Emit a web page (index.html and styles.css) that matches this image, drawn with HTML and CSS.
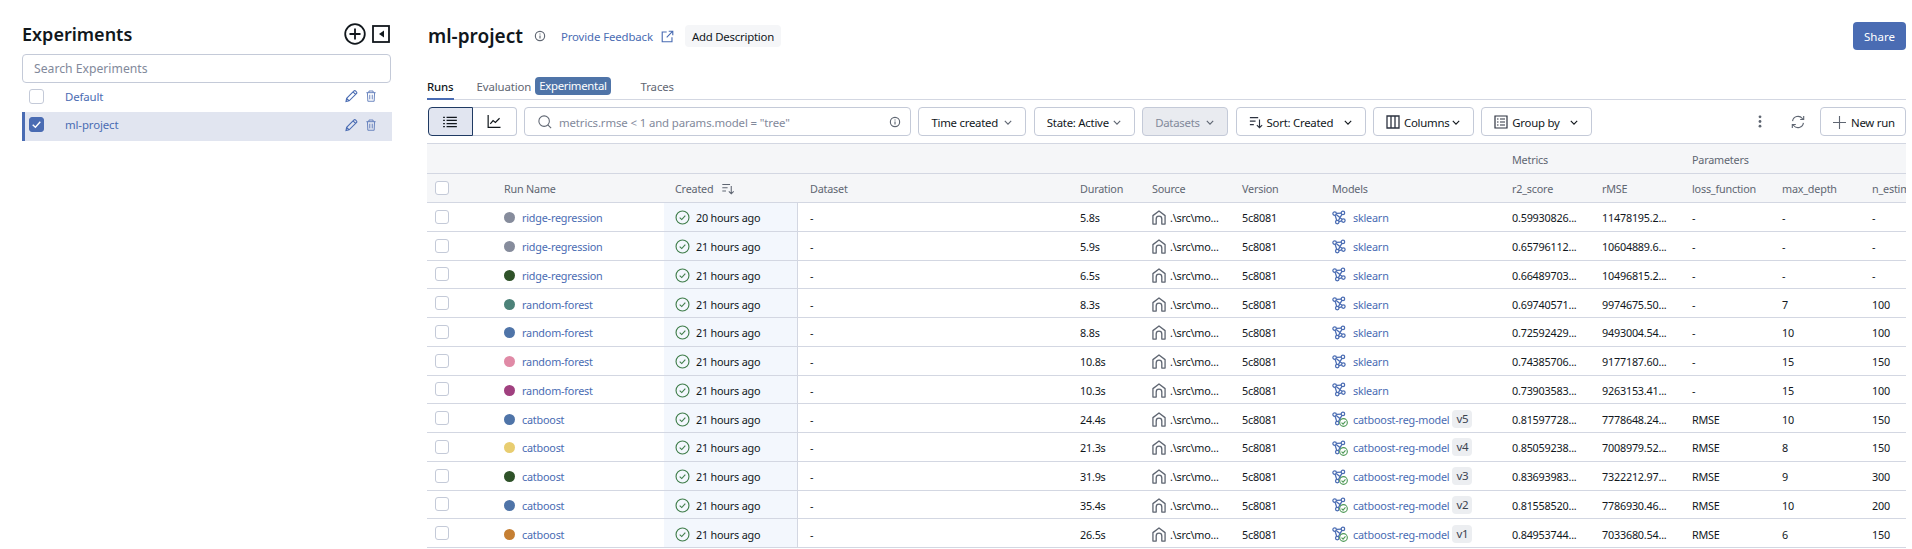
FILE: index.html
```html
<!DOCTYPE html>
<html lang="en">
<head>
  <meta charset="UTF-8" />
  <meta name="viewport" content="width=device-width, initial-scale=1.0" />
  <title>ml-project</title>
  <link rel="stylesheet" href="styles.css">
</head>
<body>
  <svg class="sprites" width="0" height="0">
    <symbol id="i-info" viewBox="0 0 16 16"><circle cx="8" cy="8" r="6.2" fill="none" stroke="currentColor" stroke-width="1.5"/><path d="M8 7.2v4M8 4.6v1.4" stroke="currentColor" stroke-width="1.5"/></symbol>
    <symbol id="i-ext" viewBox="0 0 16 16"><path d="M7 2.500H1.500v12h12V9M9.500 1.500h5v5M14.500 1.500 7 9" fill="none" stroke="currentColor" stroke-width="1.400"/></symbol>
    <symbol id="i-pencil" viewBox="0 0 16 16"><path d="M1.200 14.800l.8-3.900L10.800 2a1.700 1.700 0 0 1 2.400 0l.8.800a1.700 1.700 0 0 1 0 2.400L5.100 14zM2 10.900l3.100 3.100M9.900 3l3.100 3.100" fill="none" stroke="currentColor" stroke-width="1.300"/></symbol>
    <symbol id="i-trash" viewBox="0 0 12 14"><path d="M.5 3h11M3.500 3V1h5v2M1.700 3l.5 10.300h7.600L10.300 3M4.500 5.500v5.500M7.500 5.500v5.500" fill="none" stroke="currentColor" stroke-width="1.100"/></symbol>
    <symbol id="i-check" viewBox="0 0 16 16"><circle cx="8" cy="8" r="6.900" fill="none" stroke="currentColor" stroke-width="1.200"/><path d="M5 8.200 7.200 10.200l3.800-4.200" fill="none" stroke="currentColor" stroke-width="1.200"/></symbol>
    <symbol id="i-home" viewBox="0 0 15 16"><path d="M1 15V6l6.500-5L14 6v9h-3.500V9.500a3 3 0 0 0-6 0V15z" fill="none" stroke="currentColor" stroke-width="1.400" stroke-linejoin="round"/></symbol>
    <symbol id="i-model" viewBox="0 0 16 16"><g fill="none" stroke="currentColor" stroke-width="1.400"><circle cx="3" cy="3.500" r="2"/><circle cx="12.500" cy="2.800" r="2"/><circle cx="6" cy="13.200" r="2"/><circle cx="13" cy="11.500" r="2"/><path d="M5 3.400l5.600-.5M3.600 5.400l1.800 6M11.300 4.400l-4 7.200M4.800 4.500l6.600 5.500M8 12.800l3.100-.9"/></g></symbol>
    <symbol id="i-registered" viewBox="0 0 16 16"><circle cx="8" cy="8" r="6.800" fill="#fff" stroke="#4f9a57" stroke-width="2"/><path d="M4.500 8.200 7.200 10.800 11.500 5.800" fill="none" stroke="#4f9a57" stroke-width="2"/></symbol>
    <symbol id="i-sort" viewBox="0 0 16 16"><path d="M1 3h9.500M1 7h6.500M1 11h4.500M12 5v9.500M9 11.500l3 3 3-3" fill="none" stroke="currentColor" stroke-width="1.300"/></symbol>
    <symbol id="i-chev" viewBox="0 0 10 6"><path d="M1 1l4 4 4-4" fill="none" stroke="currentColor" stroke-width="1.400"/></symbol>
  </svg>

  <div class="page">
    <aside class="sidebar">
      <div class="side-head">
        <h1 class="side-title">Experiments</h1>
        <svg class="add-icon" viewBox="0 0 22 22"><circle cx="11" cy="11" r="9.800" fill="none" stroke="currentColor" stroke-width="1.800"/><path d="M11 5.500v11M5.500 11h11" stroke="currentColor" stroke-width="1.800"/></svg>
        <svg class="collapse-icon" viewBox="0 0 18 18"><rect x="1" y="1" width="16" height="16" fill="none" stroke="currentColor" stroke-width="1.800"/><path d="M12 5.500v7L7 9z" fill="currentColor"/></svg>
      </div>
      <input class="side-search" type="text" placeholder="Search Experiments" />
      <div class="exp-row">
        <span class="box"></span>
        <a class="exp-name">Default</a>
        <svg class="exp-icon pencil"><use href="#i-pencil"/></svg>
        <svg class="exp-icon trash"><use href="#i-trash"/></svg>
      </div>
      <div class="exp-row selected">
        <span class="box checked"><svg viewBox="0 0 12 12"><path d="M2.500 6.200 5 8.500l4.500-5" fill="none" stroke="#fff" stroke-width="1.300"/></svg></span>
        <a class="exp-name">ml-project</a>
        <svg class="exp-icon pencil"><use href="#i-pencil"/></svg>
        <svg class="exp-icon trash"><use href="#i-trash"/></svg>
      </div>
    </aside>

    <main class="main">
      <div class="title-row">
        <h2 class="title">ml-project</h2>
        <svg class="info-icon"><use href="#i-info"/></svg>
        <a class="feedback">Provide Feedback</a>
        <svg class="ext-icon"><use href="#i-ext"/></svg>
        <button class="add-desc">Add Description</button>
        <button class="share">Share</button>
      </div>

      <div class="tabs">
        <span class="tab active">Runs</span>
        <span class="tab eval">Evaluation</span>
        <span class="badge">Experimental</span>
        <span class="tab traces">Traces</span>
      </div>

      <div class="toolbar">
        <div class="view-switch">
          <span class="view on"><svg width="14" height="12" viewBox="0 0 16 14"><path d="M0 1.500h2M4 1.500h12M0 5.200h2M4 5.200h12M0 8.900h2M4 8.900h12M0 12.500h2M4 12.500h12" stroke="currentColor" stroke-width="1.400"/></svg></span>
          <span class="view"><svg width="14" height="13" viewBox="0 0 14 14"><path d="M.7 0v13.300H14M3 9.500l3-3.500 2.500 2L13 3.500" fill="none" stroke="currentColor" stroke-width="1.300"/></svg></span>
        </div>
        <div class="run-search">
          <svg class="search-icon" viewBox="0 0 16 16"><circle cx="7" cy="7" r="6" fill="none" stroke="currentColor" stroke-width="1.200"/><path d="M11.200 11.200 15 15" stroke="currentColor" stroke-width="1.200"/></svg>
          <span class="query">metrics.rmse &lt; 1 and params.model = "tree"</span>
          <svg class="info-icon"><use href="#i-info"/></svg>
        </div>
        <button class="tool w-time">Time created <svg class="chev"><use href="#i-chev"/></svg></button>
        <button class="tool w-state">State: Active <svg class="chev"><use href="#i-chev"/></svg></button>
        <button class="tool w-data" disabled>Datasets <svg class="chev"><use href="#i-chev"/></svg></button>
        <button class="tool w-sort"><svg class="tool-icon"><use href="#i-sort"/></svg>Sort: Created <svg class="chev dark"><use href="#i-chev"/></svg></button>
        <button class="tool w-cols"><svg class="tool-icon" viewBox="0 0 14 14"><path d="M1 1h12v12H1zM5 1v12M9 1v12" fill="none" stroke="currentColor" stroke-width="1.300"/></svg>Columns <svg class="chev dark"><use href="#i-chev"/></svg></button>
        <button class="tool w-group"><svg class="tool-icon" viewBox="0 0 14 14"><path d="M1 1h12v12H1zM3 4h1.500M6 4h5M3 7h1.500M6 7h5M3 10h1.500M6 10h5" fill="none" stroke="currentColor" stroke-width="1.200"/></svg>Group by <svg class="chev dark"><use href="#i-chev"/></svg></button>
        <div class="tool-right">
          <svg class="kebab" viewBox="0 0 4 14"><circle cx="2" cy="2" r="1.500"/><circle cx="2" cy="7" r="1.500"/><circle cx="2" cy="12" r="1.500"/></svg>
          <svg class="refresh" viewBox="0 0 16 16"><path d="M1.800 7A6.300 6.300 0 0 1 13 4l1 1.200M14.200 9A6.300 6.300 0 0 1 3 12l-1-1.200M14.500 1.200v4h-4M1.500 14.800v-4h4" fill="none" stroke="currentColor" stroke-width="1.300"/></svg>
          <button class="tool new-run"><svg class="plus" viewBox="0 0 14 14"><path d="M7 0v14M0 7h14" stroke="currentColor" stroke-width="1.200"/></svg>New run</button>
        </div>
      </div>

      <div class="table">
        <div class="row head group">
          <span></span><span></span><span></span><span></span><span></span><span></span><span></span><span></span>
          <span class="group-label">Metrics</span><span></span>
          <span class="group-label">Parameters</span><span></span><span></span>
        </div>
        <div class="row head">
          <span class="cell-check"><span class="box small"></span></span>
          <span>Run Name</span>
          <span class="created-head">Created <svg class="sort-mini"><use href="#i-sort"/></svg></span>
          <span>Dataset</span><span>Duration</span><span>Source</span><span>Version</span><span>Models</span>
          <span>r2_score</span><span>rMSE</span><span>loss_function</span><span>max_depth</span><span>n_estimators</span>
        </div>

        <div class="row">
          <span class="cell-check"><span class="box small"></span></span>
          <span class="run"><i class="dot c-gray"></i><a>ridge-regression</a></span>
          <span class="created"><svg class="ok"><use href="#i-check"/></svg>20 hours ago</span>
          <span>-</span><span>5.8s</span>
          <span class="src"><svg><use href="#i-home"/></svg>.\src\mo...</span><span>5c8081</span>
          <span class="model"><svg class="net"><use href="#i-model"/></svg><a>sklearn</a></span>
          <span>0.59930826...</span><span>11478195.2...</span><span>-</span><span>-</span><span>-</span>
        </div>
        <div class="row">
          <span class="cell-check"><span class="box small"></span></span>
          <span class="run"><i class="dot c-gray"></i><a>ridge-regression</a></span>
          <span class="created"><svg class="ok"><use href="#i-check"/></svg>21 hours ago</span>
          <span>-</span><span>5.9s</span>
          <span class="src"><svg><use href="#i-home"/></svg>.\src\mo...</span><span>5c8081</span>
          <span class="model"><svg class="net"><use href="#i-model"/></svg><a>sklearn</a></span>
          <span>0.65796112...</span><span>10604889.6...</span><span>-</span><span>-</span><span>-</span>
        </div>
        <div class="row">
          <span class="cell-check"><span class="box small"></span></span>
          <span class="run"><i class="dot c-forest"></i><a>ridge-regression</a></span>
          <span class="created"><svg class="ok"><use href="#i-check"/></svg>21 hours ago</span>
          <span>-</span><span>6.5s</span>
          <span class="src"><svg><use href="#i-home"/></svg>.\src\mo...</span><span>5c8081</span>
          <span class="model"><svg class="net"><use href="#i-model"/></svg><a>sklearn</a></span>
          <span>0.66489703...</span><span>10496815.2...</span><span>-</span><span>-</span><span>-</span>
        </div>
        <div class="row">
          <span class="cell-check"><span class="box small"></span></span>
          <span class="run"><i class="dot c-teal"></i><a>random-forest</a></span>
          <span class="created"><svg class="ok"><use href="#i-check"/></svg>21 hours ago</span>
          <span>-</span><span>8.3s</span>
          <span class="src"><svg><use href="#i-home"/></svg>.\src\mo...</span><span>5c8081</span>
          <span class="model"><svg class="net"><use href="#i-model"/></svg><a>sklearn</a></span>
          <span>0.69740571...</span><span>9974675.50...</span><span>-</span><span>7</span><span>100</span>
        </div>
        <div class="row">
          <span class="cell-check"><span class="box small"></span></span>
          <span class="run"><i class="dot c-blue"></i><a>random-forest</a></span>
          <span class="created"><svg class="ok"><use href="#i-check"/></svg>21 hours ago</span>
          <span>-</span><span>8.8s</span>
          <span class="src"><svg><use href="#i-home"/></svg>.\src\mo...</span><span>5c8081</span>
          <span class="model"><svg class="net"><use href="#i-model"/></svg><a>sklearn</a></span>
          <span>0.72592429...</span><span>9493004.54...</span><span>-</span><span>10</span><span>100</span>
        </div>
        <div class="row">
          <span class="cell-check"><span class="box small"></span></span>
          <span class="run"><i class="dot c-pink"></i><a>random-forest</a></span>
          <span class="created"><svg class="ok"><use href="#i-check"/></svg>21 hours ago</span>
          <span>-</span><span>10.8s</span>
          <span class="src"><svg><use href="#i-home"/></svg>.\src\mo...</span><span>5c8081</span>
          <span class="model"><svg class="net"><use href="#i-model"/></svg><a>sklearn</a></span>
          <span>0.74385706...</span><span>9177187.60...</span><span>-</span><span>15</span><span>150</span>
        </div>
        <div class="row">
          <span class="cell-check"><span class="box small"></span></span>
          <span class="run"><i class="dot c-purple"></i><a>random-forest</a></span>
          <span class="created"><svg class="ok"><use href="#i-check"/></svg>21 hours ago</span>
          <span>-</span><span>10.3s</span>
          <span class="src"><svg><use href="#i-home"/></svg>.\src\mo...</span><span>5c8081</span>
          <span class="model"><svg class="net"><use href="#i-model"/></svg><a>sklearn</a></span>
          <span>0.73903583...</span><span>9263153.41...</span><span>-</span><span>15</span><span>100</span>
        </div>
        <div class="row">
          <span class="cell-check"><span class="box small"></span></span>
          <span class="run"><i class="dot c-blue"></i><a>catboost</a></span>
          <span class="created"><svg class="ok"><use href="#i-check"/></svg>21 hours ago</span>
          <span>-</span><span>24.4s</span>
          <span class="src"><svg><use href="#i-home"/></svg>.\src\mo...</span><span>5c8081</span>
          <span class="model"><span class="net-wrap"><svg class="net"><use href="#i-model"/></svg><svg class="reg"><use href="#i-registered"/></svg></span><a>catboost-reg-model</a><b class="ver">v5</b></span>
          <span>0.81597728...</span><span>7778648.24...</span><span>RMSE</span><span>10</span><span>150</span>
        </div>
        <div class="row">
          <span class="cell-check"><span class="box small"></span></span>
          <span class="run"><i class="dot c-yellow"></i><a>catboost</a></span>
          <span class="created"><svg class="ok"><use href="#i-check"/></svg>21 hours ago</span>
          <span>-</span><span>21.3s</span>
          <span class="src"><svg><use href="#i-home"/></svg>.\src\mo...</span><span>5c8081</span>
          <span class="model"><span class="net-wrap"><svg class="net"><use href="#i-model"/></svg><svg class="reg"><use href="#i-registered"/></svg></span><a>catboost-reg-model</a><b class="ver">v4</b></span>
          <span>0.85059238...</span><span>7008979.52...</span><span>RMSE</span><span>8</span><span>150</span>
        </div>
        <div class="row">
          <span class="cell-check"><span class="box small"></span></span>
          <span class="run"><i class="dot c-forest"></i><a>catboost</a></span>
          <span class="created"><svg class="ok"><use href="#i-check"/></svg>21 hours ago</span>
          <span>-</span><span>31.9s</span>
          <span class="src"><svg><use href="#i-home"/></svg>.\src\mo...</span><span>5c8081</span>
          <span class="model"><span class="net-wrap"><svg class="net"><use href="#i-model"/></svg><svg class="reg"><use href="#i-registered"/></svg></span><a>catboost-reg-model</a><b class="ver">v3</b></span>
          <span>0.83693983...</span><span>7322212.97...</span><span>RMSE</span><span>9</span><span>300</span>
        </div>
        <div class="row">
          <span class="cell-check"><span class="box small"></span></span>
          <span class="run"><i class="dot c-blue"></i><a>catboost</a></span>
          <span class="created"><svg class="ok"><use href="#i-check"/></svg>21 hours ago</span>
          <span>-</span><span>35.4s</span>
          <span class="src"><svg><use href="#i-home"/></svg>.\src\mo...</span><span>5c8081</span>
          <span class="model"><span class="net-wrap"><svg class="net"><use href="#i-model"/></svg><svg class="reg"><use href="#i-registered"/></svg></span><a>catboost-reg-model</a><b class="ver">v2</b></span>
          <span>0.81558520...</span><span>7786930.46...</span><span>RMSE</span><span>10</span><span>200</span>
        </div>
        <div class="row">
          <span class="cell-check"><span class="box small"></span></span>
          <span class="run"><i class="dot c-orange"></i><a>catboost</a></span>
          <span class="created"><svg class="ok"><use href="#i-check"/></svg>21 hours ago</span>
          <span>-</span><span>26.5s</span>
          <span class="src"><svg><use href="#i-home"/></svg>.\src\mo...</span><span>5c8081</span>
          <span class="model"><span class="net-wrap"><svg class="net"><use href="#i-model"/></svg><svg class="reg"><use href="#i-registered"/></svg></span><a>catboost-reg-model</a><b class="ver">v1</b></span>
          <span>0.84953744...</span><span>7033680.54...</span><span>RMSE</span><span>6</span><span>150</span>
        </div>
      </div>
    </main>
  </div>
</body>
</html>
```

FILE: styles.css
```css
* {
  box-sizing: border-box;
}
html, body {
  margin: 0;
  height: 100%;
  overflow: hidden;
}
body {
  font-family: "Noto Sans", Arial, sans-serif;
  font-size: 11.400px;
  letter-spacing: -0.120px;
  color: #11171c;
  background: #fff;
}
a {
  color: #4a6cb3;
}
.sprites {
  position: absolute;
}
.page {
  display: flex;
  width: 1912px;
  padding: 22px 6px 0 22px;
}

/* sidebar */
.sidebar {
  width: 370px;
  flex: none;
}
.side-head {
  display: flex;
  align-items: center;
  height: 24px;
  margin-bottom: 8px;
}
.side-title {
  margin: 0 auto 0 0;
  font-size: 18px;
  font-weight: 600;
  letter-spacing: 0;
}
.add-icon {
  width: 22px;
  height: 22px;
  margin-right: 6px;
}
.collapse-icon {
  width: 18px;
  height: 18px;
  margin-right: 2px;
}
.side-search {
  display: block;
  width: 369px;
  height: 29px;
  padding: 0 11px;
  border: 1px solid #c4cad8;
  border-radius: 4px;
  font: inherit;
  font-size: 12.200px;
  letter-spacing: 0;
}
.side-search::placeholder {
  color: #82899b;
}
.exp-row {
  display: flex;
  align-items: center;
  height: 29px;
  padding: 0 0 3px 7px;
}
.exp-row.selected {
  background: #e1e5f0;
  border-left: 3px solid #4a6cb3;
  padding: 0 0 4px 4px;
}
.exp-name {
  margin-left: 21px;
  margin-right: auto;
}
.exp-icon {
  width: 13px;
  height: 14px;
  color: #4a6cb3;
}
.exp-icon.trash {
  width: 10px;
  margin: 0 16px 0 8px;
  color: #5f7cba;
}
.box {
  display: block;
  width: 15px;
  height: 15px;
  flex: none;
  border: 1px solid #c4cad8;
  border-radius: 3px;
  background: #fff;
}
.box.small {
  width: 14px;
  height: 14px;
}
.box.checked {
  background: #4a6cb3;
  border-color: #4a6cb3;
}
.box.checked svg {
  display: block;
  width: 13px;
  height: 13px;
}

/* title and tabs */
.main {
  width: 1478px;
  margin-left: 36px;
  flex: none;
}
.title-row {
  display: flex;
  align-items: center;
  height: 28px;
}
.title {
  margin: 0;
  font-size: 19px;
  font-weight: 600;
  letter-spacing: 0;
}
.info-icon {
  width: 12px;
  height: 12px;
  color: #5f6672;
}
.title-row .info-icon {
  margin-left: 11px;
}
.feedback {
  margin-left: 15px;
}
.ext-icon {
  width: 13px;
  height: 13px;
  margin-left: 8px;
  color: #4a6cb3;
}
.add-desc {
  height: 22px;
  margin-left: 11px;
  padding: 0 7px;
  border: none;
  border-radius: 4px;
  background: #f5f6f8;
  font: inherit;
  letter-spacing: -0.230px;
  color: #11171c;
}
.share {
  width: 53px;
  height: 28px;
  margin-left: auto;
  border: none;
  border-radius: 4px;
  background: #4a6cb3;
  color: #fff;
  font: inherit;
  font-size: 11.500px;
}
.tabs {
  display: flex;
  align-items: center;
  height: 28px;
  margin: 22px 0 0 -1px;
  border-bottom: 1px solid #d3d7e2;
}
.tab {
  padding-top: 1px;
  line-height: 27px;
  color: #5f6672;
}
.tab.active {
  color: #11171c;
  font-weight: 500;
  box-shadow: inset 0 -2px 0 #4a6cb3;
  height: 28px;
}
.tab.eval {
  margin-left: 23px;
}
.badge {
  margin-left: 4px;
  padding: 0 4px;
  height: 18px;
  line-height: 18px;
  border-radius: 4px;
  background: #4f74a8;
  color: #fff;
  letter-spacing: -0.300px;
}
.tab.traces {
  margin-left: 30px;
}

/* toolbar */
.toolbar {
  display: flex;
  align-items: center;
  gap: 7.400px;
  height: 29px;
  margin-top: 7px;
}
.view-switch {
  display: flex;
  width: 88.600px;
  height: 29px;
  flex: none;
}
.view {
  flex: 1;
  display: flex;
  align-items: center;
  justify-content: center;
  border: 1px solid #c4cad8;
  border-left: none;
  border-radius: 0 4px 4px 0;
}
.view.on {
  background: #e1e5f0;
  border: 1px solid #1f3a63;
  border-radius: 4px 0 0 4px;
}
.run-search {
  display: flex;
  align-items: center;
  width: 387px;
  height: 29px;
  padding: 0 9px 0 13px;
  flex: none;
  border: 1px solid #c4cad8;
  border-radius: 4px;
}
.search-icon {
  width: 14px;
  height: 14px;
  color: #5f6672;
}
.query {
  margin: 1px auto 0 7px;
  color: #82899b;
}
.tool {
  display: flex;
  align-items: center;
  height: 29px;
  padding: 1px 13px 0 12px;
  flex: none;
  border: 1px solid #c4cad8;
  border-radius: 4px;
  background: #fff;
  font: inherit;
  letter-spacing: -0.250px;
  color: #11171c;
  white-space: nowrap;
}
.tool[disabled] {
  background: #e9ebf0;
  color: #82899b;
}
.w-time { width: 108px; }
.w-state { width: 101px; }
.w-data { width: 86px; }
.w-sort { width: 130px; }
.w-cols { width: 101px; }
.w-group { width: 111px; }
.chev {
  width: 8px;
  height: 5px;
  margin-left: auto;
  color: #5f6672;
}
.chev.dark {
  color: #11171c;
}
.tool-icon {
  width: 14px;
  height: 14px;
  margin-right: 4px;
  flex: none;
  color: #2d3340;
}
.tool-right {
  display: flex;
  align-items: center;
  margin-left: auto;
}
.kebab {
  width: 4px;
  height: 13px;
  fill: #5f6672;
}
.refresh {
  width: 14px;
  height: 14px;
  margin: 0 15px 0 29px;
  color: #5f6672;
}
.tool.new-run {
  width: 86px;
  padding: 1px 0 0 12px;
}
.plus {
  width: 13px;
  height: 13px;
  margin-right: 5px;
  flex: none;
  color: #5f6672;
}

/* runs table */
.table {
  width: 1479px;
  margin: 7px 0 0 -1px;
  overflow: hidden;
  border-top: 1px solid #d3d7e2;
  font-size: 10.800px;
  letter-spacing: -0.200px;
}
.row {
  display: grid;
  grid-template-columns: 65px 172px 134px 270px 72px 90px 90px 180px 90px 90px 90px 90px 90px;
  align-items: center;
  height: 28.750px;
  border-bottom: 1px solid #d3d7e2;
  white-space: nowrap;
}
.row > span {
  padding-left: 12px;
  padding-top: 2px;
}
.row > .model {
  padding-top: 1px;
}
.row.head {
  height: 29.500px;
  background: #f5f6f8;
  color: #5f6672;
}
.row > .cell-check {
  padding: 0 0 0 8px;
}
.row > .created-head {
  display: flex;
  align-items: center;
  padding-left: 11px;
}
.sort-mini {
  width: 14px;
  height: 13px;
  margin-left: 8px;
}
.run {
  display: flex;
  align-items: center;
}
.dot {
  width: 11px;
  height: 11px;
  margin-right: 7px;
  border-radius: 50%;
}
.c-gray { background: #868c9c; }
.c-forest { background: #2f5229; }
.c-teal { background: #4c8279; }
.c-blue { background: #4f74a8; }
.c-pink { background: #e08aa6; }
.c-purple { background: #a0407f; }
.c-yellow { background: #e8cd70; }
.c-orange { background: #c57f33; }
.row > .created {
  display: flex;
  align-items: center;
  align-self: stretch;
  padding-left: 11px;
  background: #f3f7fd;
  border-right: 1px solid #d3d7e2;
}
.ok {
  width: 15px;
  height: 15px;
  margin-right: 6px;
  color: #3f7d4a;
}
.src {
  display: flex;
  align-items: center;
}
.src svg {
  width: 14px;
  height: 15px;
  margin-right: 4px;
  color: #5f6672;
}
.model {
  display: flex;
  align-items: center;
}
.model a {
  padding-top: 1px;
}
.net {
  width: 14px;
  height: 15px;
  color: #4a6cb3;
}
.model > .net {
  margin-right: 7px;
}
.net-wrap {
  position: relative;
  width: 14px;
  height: 15px;
  margin-right: 7px;
}
.reg {
  position: absolute;
  right: -2px;
  bottom: -1px;
  width: 9px;
  height: 9px;
}
.ver {
  margin-left: 3px;
  padding: 0 4px;
  height: 18px;
  line-height: 18px;
  border-radius: 4px;
  background: #eceef1;
  color: #3c4350;
  font-size: 11.500px;
  font-weight: 400;
}
```
